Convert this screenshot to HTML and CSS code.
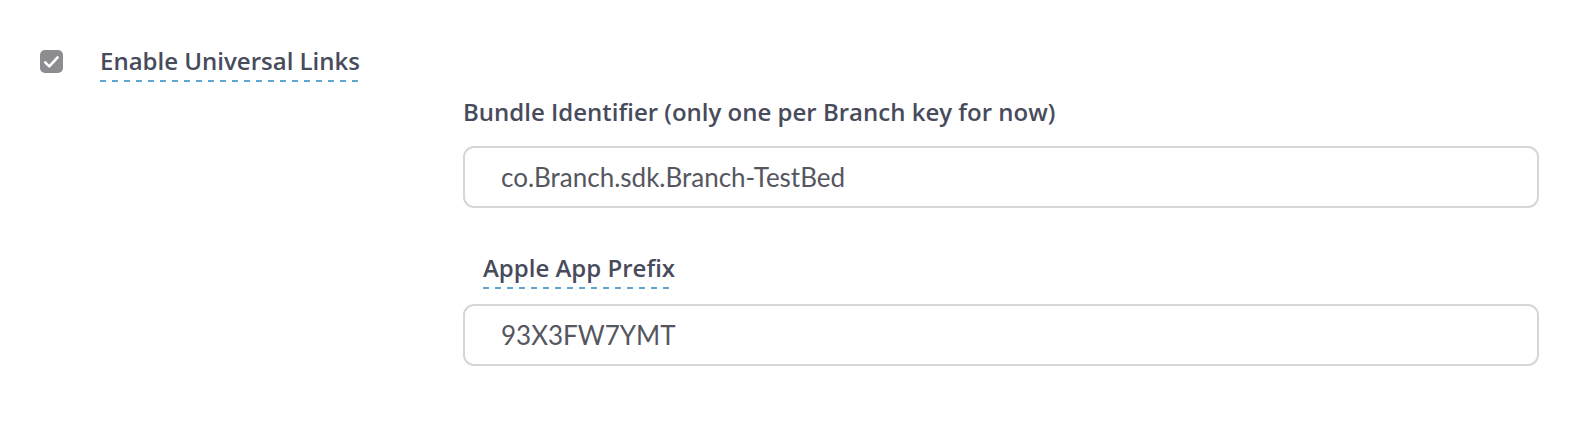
FILE: index.html
```html
<!DOCTYPE html>
<html>
<head>
<meta charset="utf-8">
<link rel="stylesheet" href="styles.css">
</head>
<body>
<div class="page">
  <div class="toggle-row">
    <span class="checkbox">
      <svg width="17" height="14" viewBox="0 0 17 14"><path d="M2.2 7.4 L6.3 11.4 L14.6 2.4" fill="none" stroke="#fff" stroke-width="2.6" stroke-linecap="round" stroke-linejoin="round"/></svg>
    </span>
    <span class="label dashed">Enable Universal Links</span>
  </div>
  <div class="fields">
    <div class="field">
      <div class="field-label">Bundle Identifier (only one per Branch key for now)</div>
      <div class="input">co.Branch.sdk.Branch-TestBed</div>
    </div>
    <div class="field field-second">
      <div class="field-label indent"><span class="dashed">Apple App Prefix</span></div>
      <div class="input">93X3FW7YMT</div>
    </div>
  </div>
</div>
</body>
</html>
```

FILE: styles.css
```css
html, body {
  margin: 0;
  padding: 0;
  background: #ffffff;
}
body {
  font-family: "Open Sans", "Liberation Sans", sans-serif;
  color: #484b5c;
}
.page {
  padding: 50px 51px 0 40px;
}
.toggle-row {
  display: flex;
  align-items: flex-start;
  gap: 37px;
  height: 44px;
}
.checkbox {
  width: 23px;
  height: 23px;
  border-radius: 5px;
  background: #8c8c91;
  display: flex;
  align-items: center;
  justify-content: center;
}
.label {
  font-size: 24px;
  font-weight: 600;
  line-height: 28px;
  margin-top: -3px;
}
.dashed {
  background-image: linear-gradient(to right, #5ea7cf 0 6px, transparent 6px 12px);
  background-size: 12px 2px;
  background-repeat: repeat-x;
  background-position: 0 100%;
  padding-bottom: 7px;
}
.fields {
  margin-left: 423px;
  display: flex;
  flex-direction: column;
  gap: 48px;
  margin-top: 4px;
}
.field {
  display: flex;
  flex-direction: column;
  gap: 20px;
}
.field-label {
  font-size: 24px;
  font-weight: 600;
  line-height: 28px;
}
.field-second .field-label {
  margin-top: -2px;
  margin-bottom: 2px;
}
.field-second .dashed {
  padding-bottom: 5px;
}
.indent {
  padding-left: 20px;
}
.input {
  height: 58px;
  border: 2px solid #d6d6da;
  border-radius: 11px;
  box-sizing: content-box;
  padding: 0 36px;
  display: flex;
  align-items: center;
  font-family: "Lato", "Liberation Sans", sans-serif;
  font-size: 26px;
  font-weight: 400;
  color: #55565f;
}
```
